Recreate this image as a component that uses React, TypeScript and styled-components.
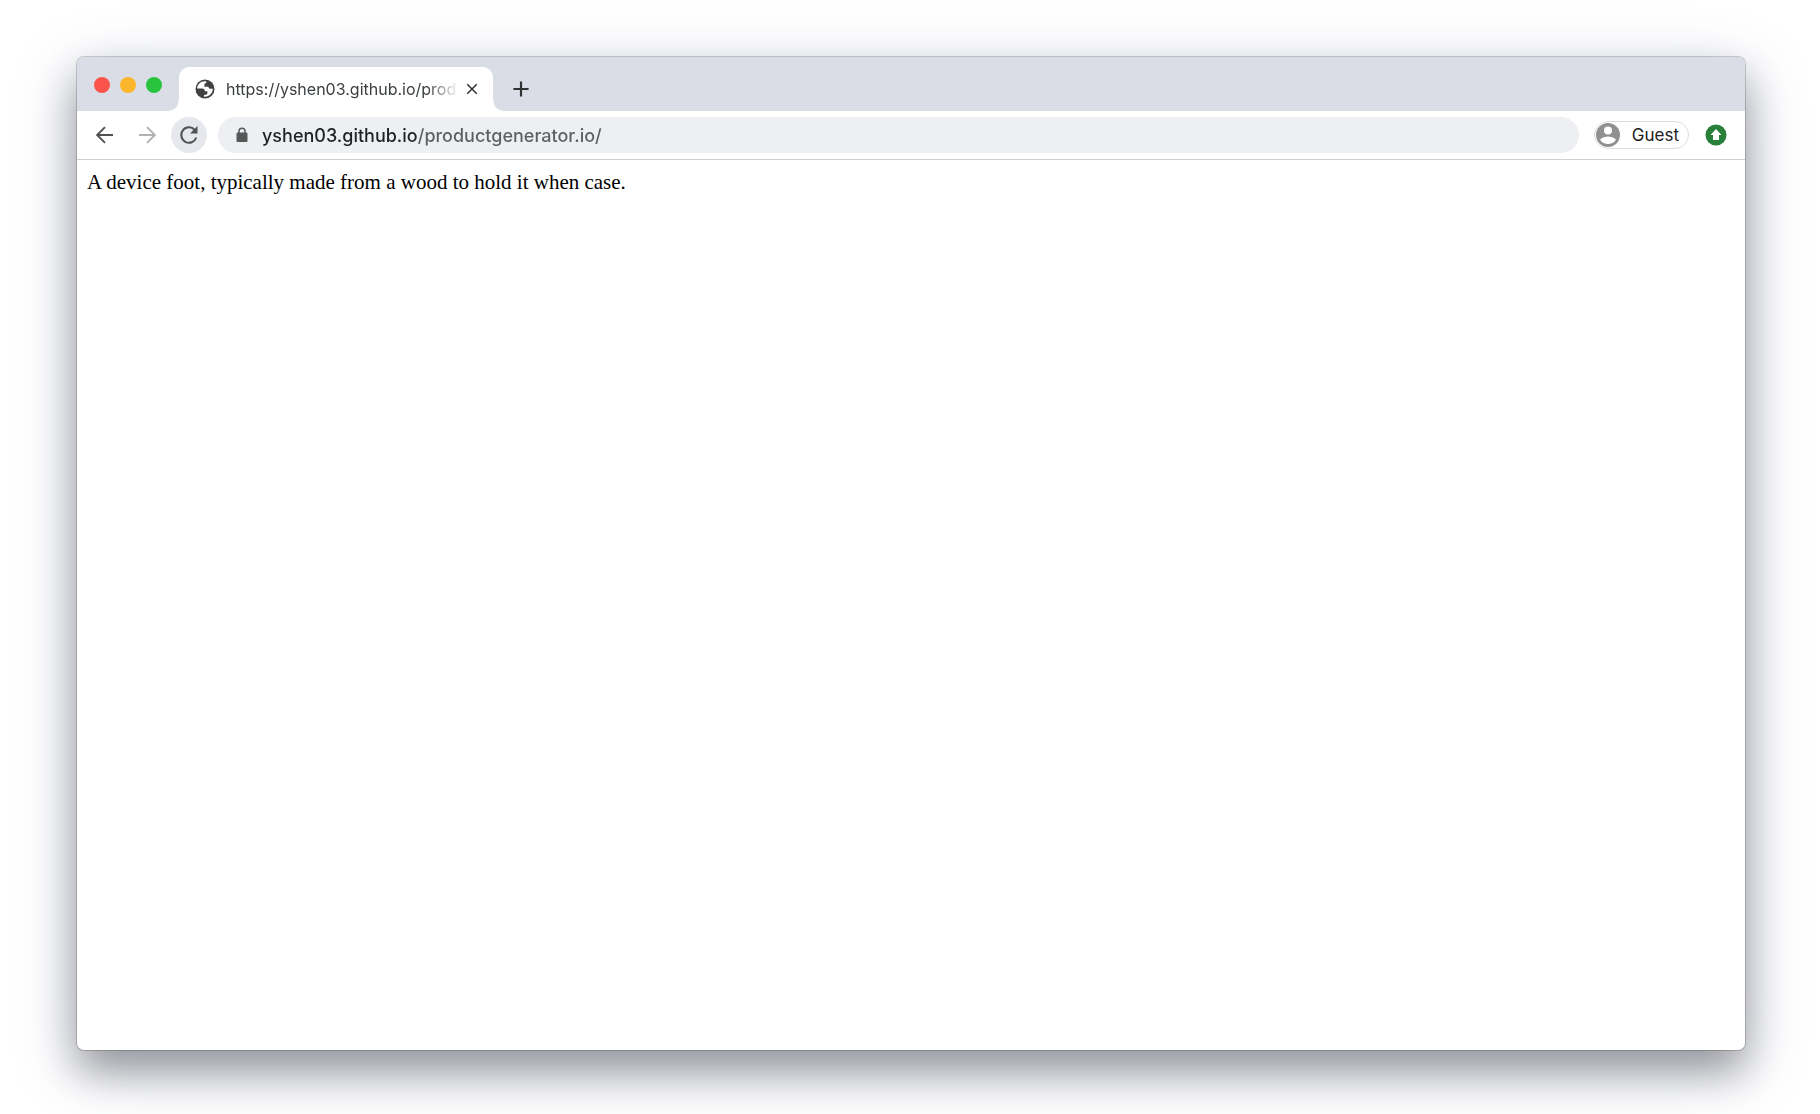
import React from "react";
import styled, { createGlobalStyle } from "styled-components";
import { MdClose, MdAdd } from "react-icons/md";

const GlobalStyle = createGlobalStyle`
  *, *::before, *::after { box-sizing: border-box; }
  body { margin: 0; background: #ffffff; }
  button, input { font: inherit; }
`;

const Desktop = styled.div`
  display: flex;
  flex-direction: column;
  min-height: 100vh;
  padding: 57px 75px 64px 77px;
  font-family: Inter, Roboto, sans-serif;
`;

const BrowserWindow = styled.section`
  display: flex;
  flex: 1;
  flex-direction: column;
  border-radius: 7px;
  background: #ffffff;
  box-shadow:
    0 0 0 1px rgba(0, 0, 0, 0.18),
    0 22px 40px rgba(0, 0, 0, 0.32),
    0 16px 64px rgba(70, 85, 140, 0.26);
`;

const TabStrip = styled.header`
  display: flex;
  align-items: flex-end;
  height: 54px;
  padding-left: 17px;
  border-radius: 7px 7px 0 0;
  background: #dadde5;
`;

const WindowControls = styled.div`
  display: flex;
  gap: 10px;
  align-self: center;
  margin: 2px 17px 0 0;
`;

const WindowControl = styled.button<{ $color: string }>`
  width: 16px;
  height: 16px;
  padding: 0;
  border: 0;
  border-radius: 50%;
  background: ${({ $color }) => $color};
`;

const Tab = styled.div`
  position: relative;
  display: flex;
  align-items: center;
  width: 314px;
  height: 44px;
  padding: 0 12px 0 16px;
  border-radius: 10px 10px 0 0;
  background: #ffffff;
  color: #3c4043;

  &::before,
  &::after {
    content: "";
    position: absolute;
    bottom: 0;
    width: 10px;
    height: 10px;
  }
  &::before {
    right: 100%;
    background: radial-gradient(circle at 0 0, transparent 9px, #ffffff 10px);
  }
  &::after {
    left: 100%;
    background: radial-gradient(circle at 100% 0, transparent 9px, #ffffff 10px);
  }
`;

const TabTitle = styled.span`
  flex: 1;
  margin: 0 4px 0 11px;
  overflow: hidden;
  font-size: 16px;
  line-height: 20px;
  white-space: nowrap;
  mask-image: linear-gradient(90deg, #000 calc(100% - 32px), transparent);
`;

const IconButton = styled.button<{ $size: number; $filled?: boolean; $color?: string }>`
  display: flex;
  flex: none;
  align-items: center;
  justify-content: center;
  width: ${({ $size }) => $size}px;
  height: ${({ $size }) => $size}px;
  padding: 0;
  border: 0;
  border-radius: 50%;
  background: ${({ $filled }) => ($filled ? "#e6e8ed" : "transparent")};
  color: ${({ $color }) => $color ?? "#505352"};
`;

const NewTabSlot = styled.div`
  display: flex;
  align-items: center;
  height: 44px;
  margin-left: 11px;
`;

const Toolbar = styled.div`
  display: flex;
  align-items: center;
  height: 49px;
  padding: 0 18px 0 10px;
  border-bottom: 1px solid #cfd0d3;
`;

const Navigation = styled.nav`
  display: flex;
  gap: 6px;
  margin-right: 11px;
`;

const AddressBar = styled.label`
  display: flex;
  flex: 1;
  align-items: center;
  gap: 12px;
  height: 36px;
  padding: 0 16px;
  border-radius: 18px;
  background: #eeeff3;
  color: #555857;
`;

const AddressInput = styled.input`
  flex: 1;
  min-width: 0;
  height: 28px;
  padding: 0;
  border: 0;
  outline: 0;
  background: linear-gradient(90deg, #1f2123 156px, #5c5f62 156px);
  background-clip: text;
  -webkit-text-fill-color: transparent;
  font-size: 18px;
  font-weight: 500;
`;

const ProfileButton = styled.button`
  display: flex;
  align-items: center;
  gap: 12px;
  height: 28px;
  margin: 0 16px 0 15px;
  padding: 0 9px 0 1px;
  border: 1px solid #dadde5;
  border-radius: 14px;
  background: #ffffff;
  color: #202124;
  font-size: 17px;
  line-height: 20px;
`;

const Page = styled.main`
  padding: 10px;
  color: #000000;
  font-family: "Liberation Serif", "Times New Roman", serif;
  font-size: 21px;
  line-height: 24px;

  p { margin: 0; }
`;

const GlobeIcon = () => (
  <svg width="20" height="20" viewBox="0 0 20 20" aria-hidden="true">
    <circle cx="10" cy="10" r="9.5" fill="#3f4241" />
    <path d="M11.2 2.4C6 1.6 2.2 5.2 2.2 9.6H7.2C9 9.6 9.8 10.6 9.8 12.2H12.4V14.2C12.4 15.4 11.4 15.8 9 16V17.7C14.2 18.2 17.8 14.2 17.8 9.8H15.4C14 9.8 13.5 9 13.5 7.8H9.4V5.6C9.4 4.4 10.2 4.2 11.2 4.2Z" fill="#fff" />
  </svg>
);

const ArrowIcon = ({ forward = false }: { forward?: boolean }) => (
  <svg width="18" height="18" viewBox="0 0 18 18" fill="none" stroke="currentColor" strokeWidth="1.9" aria-hidden="true">
    <path d={forward ? "M1 9H16.500M9 1.200 16.800 9 9 16.800" : "M17 9H1.500M9 1.200 1.200 9 9 16.800"} />
  </svg>
);

const ReloadIcon = () => (
  <svg width="20" height="20" viewBox="0 0 20 20" aria-hidden="true">
    <path d="M15.800 5A7.700 7.700 0 1 0 17.300 12.500" fill="none" stroke="currentColor" strokeWidth="2" />
    <path d="M18.500 1V8.500H11Z" fill="currentColor" />
  </svg>
);

const LockIcon = () => (
  <svg width="16" height="16" viewBox="0 0 16 16" aria-hidden="true">
    <rect x="2.500" y="5.500" width="11" height="9.500" rx="1.200" fill="currentColor" />
    <path d="M5 6V4.200A3 3 0 0 1 11 4.200V6" fill="none" stroke="currentColor" strokeWidth="1.500" />
  </svg>
);

const AvatarIcon = () => (
  <svg width="24" height="24" viewBox="0 0 24 24" aria-hidden="true">
    <circle cx="12" cy="12" r="12" fill="#8f908f" />
    <circle cx="12" cy="7.500" r="4" fill="#fff" />
    <path d="M4 16.800C6 14.200 9 13.400 12 13.400S18 14.200 20 16.800C18 19.700 15.200 21 12 21S6 19.700 4 16.800Z" fill="#fff" />
  </svg>
);

const UpdateIcon = () => (
  <svg width="22" height="22" viewBox="0 0 22 22" aria-hidden="true">
    <circle cx="11" cy="11" r="10.500" fill="#28803a" />
    <path d="M11 5 16.500 11H14V16H8V11H5.500Z" fill="#fff" />
  </svg>
);

export default function App() {
  return (
    <>
      <GlobalStyle />
      <Desktop>
        <BrowserWindow aria-label="Browser window">
          <TabStrip>
            <WindowControls>
              <WindowControl $color="#fa544d" aria-label="Close window" />
              <WindowControl $color="#fdb62c" aria-label="Minimize window" />
              <WindowControl $color="#29c33e" aria-label="Zoom window" />
            </WindowControls>
            <Tab>
              <GlobeIcon />
              <TabTitle>https://yshen03.github.io/prod</TabTitle>
              <IconButton $size={18} $color="#303234" aria-label="Close tab"><MdClose size={18} /></IconButton>
            </Tab>
            <NewTabSlot>
              <IconButton $size={34} $color="#303234" aria-label="New tab"><MdAdd size={26} /></IconButton>
            </NewTabSlot>
          </TabStrip>
          <Toolbar>
            <Navigation>
              <IconButton $size={36} aria-label="Back"><ArrowIcon /></IconButton>
              <IconButton $size={36} $color="#b1b2b4" aria-label="Forward"><ArrowIcon forward /></IconButton>
              <IconButton $size={36} $filled aria-label="Reload"><ReloadIcon /></IconButton>
            </Navigation>
            <AddressBar>
              <LockIcon />
              <AddressInput aria-label="Address" defaultValue="yshen03.github.io/productgenerator.io/" spellCheck={false} />
            </AddressBar>
            <ProfileButton>
              <AvatarIcon />
              Guest
            </ProfileButton>
            <IconButton $size={22} aria-label="Update browser"><UpdateIcon /></IconButton>
          </Toolbar>
          <Page>
            <p>A device foot, typically made from a wood to hold it when case.</p>
          </Page>
        </BrowserWindow>
      </Desktop>
    </>
  );
}
